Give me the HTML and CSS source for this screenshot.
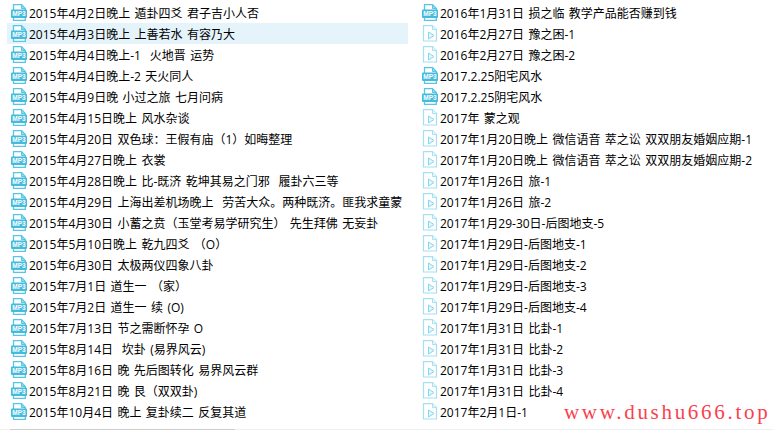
FILE: index.html
```html
<!DOCTYPE html>
<html lang="zh-CN">
  <head>
    <meta charset="UTF-8">
    <title>文件列表</title>
    <link rel="stylesheet" href="styles.css">
  </head>
  <body>
    <svg class="defs" width="0" height="0">
      <symbol id="mp3" viewBox="0 0 16 17">
        <path d="M2.5 .7H10.5L14.3 4.5V16.3H2.5Z" fill="#fff" stroke="#55c6e5" stroke-width="1.3"/>
        <path d="M10.5 .7V4.5H14.3Z" fill="#8fdcf0" stroke="#55c6e5"/>
        <rect x="0" y="5.5" width="16" height="8.5" rx="1" fill="#43bbdd"/>
      </symbol>
      <symbol id="play" viewBox="0 0 16 17">
        <path d="M1.5 .6H10.5L14.5 4.6V16H1.5Z" fill="#fff" stroke="#a3e0f1" stroke-width="1.2"/>
        <path d="M10.5 .6V4.6H14.5" fill="#e6f8fc" stroke="#a3e0f1"/>
        <path d="M6.5 7L12 10.5L6.5 14Z" fill="#e3f7fc" stroke="#86d6ed"/>
      </symbol>
    </svg>

    <div class="files">
      <div class="file"><svg class="icon" viewBox="0 0 16 17"><use href="#mp3"/><text x="8" y="12.4" class="mp3-label">MP3</text></svg><span>2015年4月2日晚上 遁卦四爻 君子吉小人否</span></div>
      <div class="file selected"><svg class="icon" viewBox="0 0 16 17"><use href="#mp3"/><text x="8" y="12.4" class="mp3-label">MP3</text></svg><span>2015年4月3日晚上 上善若水 有容乃大</span></div>
      <div class="file"><svg class="icon" viewBox="0 0 16 17"><use href="#mp3"/><text x="8" y="12.4" class="mp3-label">MP3</text></svg><span>2015年4月4日晚上-1  火地晋 运势</span></div>
      <div class="file"><svg class="icon" viewBox="0 0 16 17"><use href="#mp3"/><text x="8" y="12.4" class="mp3-label">MP3</text></svg><span>2015年4月4日晚上-2 天火同人</span></div>
      <div class="file"><svg class="icon" viewBox="0 0 16 17"><use href="#mp3"/><text x="8" y="12.4" class="mp3-label">MP3</text></svg><span>2015年4月9日晚 小过之旅 七月问病</span></div>
      <div class="file"><svg class="icon" viewBox="0 0 16 17"><use href="#mp3"/><text x="8" y="12.4" class="mp3-label">MP3</text></svg><span>2015年4月15日晚上 风水杂谈</span></div>
      <div class="file"><svg class="icon" viewBox="0 0 16 17"><use href="#mp3"/><text x="8" y="12.4" class="mp3-label">MP3</text></svg><span>2015年4月20日 双色球：王假有庙（1）如晦整理</span></div>
      <div class="file"><svg class="icon" viewBox="0 0 16 17"><use href="#mp3"/><text x="8" y="12.4" class="mp3-label">MP3</text></svg><span>2015年4月27日晚上 衣裳</span></div>
      <div class="file"><svg class="icon" viewBox="0 0 16 17"><use href="#mp3"/><text x="8" y="12.4" class="mp3-label">MP3</text></svg><span>2015年4月28日晚上 比-既济 乾坤其易之门邪  履卦六三等</span></div>
      <div class="file"><svg class="icon" viewBox="0 0 16 17"><use href="#mp3"/><text x="8" y="12.4" class="mp3-label">MP3</text></svg><span>2015年4月29日 上海出差机场晚上  劳苦大众。两种既济。匪我求童蒙</span></div>
      <div class="file"><svg class="icon" viewBox="0 0 16 17"><use href="#mp3"/><text x="8" y="12.4" class="mp3-label">MP3</text></svg><span>2015年4月30日 小蓄之贲（玉堂考易学研究生） 先生拜佛 无妄卦</span></div>
      <div class="file"><svg class="icon" viewBox="0 0 16 17"><use href="#mp3"/><text x="8" y="12.4" class="mp3-label">MP3</text></svg><span>2015年5月10日晚上 乾九四爻 （O）</span></div>
      <div class="file"><svg class="icon" viewBox="0 0 16 17"><use href="#mp3"/><text x="8" y="12.4" class="mp3-label">MP3</text></svg><span>2015年6月30日 太极两仪四象八卦</span></div>
      <div class="file"><svg class="icon" viewBox="0 0 16 17"><use href="#mp3"/><text x="8" y="12.4" class="mp3-label">MP3</text></svg><span>2015年7月1日 道生一 （家）</span></div>
      <div class="file"><svg class="icon" viewBox="0 0 16 17"><use href="#mp3"/><text x="8" y="12.4" class="mp3-label">MP3</text></svg><span>2015年7月2日 道生一 续 (O)</span></div>
      <div class="file"><svg class="icon" viewBox="0 0 16 17"><use href="#mp3"/><text x="8" y="12.4" class="mp3-label">MP3</text></svg><span>2015年7月13日 节之需断怀孕 O</span></div>
      <div class="file"><svg class="icon" viewBox="0 0 16 17"><use href="#mp3"/><text x="8" y="12.4" class="mp3-label">MP3</text></svg><span>2015年8月14日  坎卦 (易界风云)</span></div>
      <div class="file"><svg class="icon" viewBox="0 0 16 17"><use href="#mp3"/><text x="8" y="12.4" class="mp3-label">MP3</text></svg><span>2015年8月16日 晚 先后图转化 易界风云群</span></div>
      <div class="file"><svg class="icon" viewBox="0 0 16 17"><use href="#mp3"/><text x="8" y="12.4" class="mp3-label">MP3</text></svg><span>2015年8月21日 晚 艮（双双卦)</span></div>
      <div class="file"><svg class="icon" viewBox="0 0 16 17"><use href="#mp3"/><text x="8" y="12.4" class="mp3-label">MP3</text></svg><span>2015年10月4日 晚上 复卦续二 反复其道</span></div>

      <div class="file"><svg class="icon" viewBox="0 0 16 17"><use href="#mp3"/><text x="8" y="12.4" class="mp3-label">MP3</text></svg><span>2016年1月31日 损之临 教学产品能否赚到钱</span></div>
      <div class="file"><svg class="icon" viewBox="0 0 16 17"><use href="#play"/></svg><span>2016年2月27日 豫之困-1</span></div>
      <div class="file"><svg class="icon" viewBox="0 0 16 17"><use href="#play"/></svg><span>2016年2月27日 豫之困-2</span></div>
      <div class="file"><svg class="icon" viewBox="0 0 16 17"><use href="#mp3"/><text x="8" y="12.4" class="mp3-label">MP3</text></svg><span>2017.2.25阳宅风水</span></div>
      <div class="file"><svg class="icon" viewBox="0 0 16 17"><use href="#mp3"/><text x="8" y="12.4" class="mp3-label">MP3</text></svg><span>2017.2.25阴宅风水</span></div>
      <div class="file"><svg class="icon" viewBox="0 0 16 17"><use href="#play"/></svg><span>2017年 蒙之观</span></div>
      <div class="file"><svg class="icon" viewBox="0 0 16 17"><use href="#play"/></svg><span>2017年1月20日晚上 微信语音 萃之讼 双双朋友婚姻应期-1</span></div>
      <div class="file"><svg class="icon" viewBox="0 0 16 17"><use href="#play"/></svg><span>2017年1月20日晚上 微信语音 萃之讼 双双朋友婚姻应期-2</span></div>
      <div class="file"><svg class="icon" viewBox="0 0 16 17"><use href="#play"/></svg><span>2017年1月26日 旅-1</span></div>
      <div class="file"><svg class="icon" viewBox="0 0 16 17"><use href="#play"/></svg><span>2017年1月26日 旅-2</span></div>
      <div class="file"><svg class="icon" viewBox="0 0 16 17"><use href="#play"/></svg><span>2017年1月29-30日-后图地支-5</span></div>
      <div class="file"><svg class="icon" viewBox="0 0 16 17"><use href="#play"/></svg><span>2017年1月29日-后图地支-1</span></div>
      <div class="file"><svg class="icon" viewBox="0 0 16 17"><use href="#play"/></svg><span>2017年1月29日-后图地支-2</span></div>
      <div class="file"><svg class="icon" viewBox="0 0 16 17"><use href="#play"/></svg><span>2017年1月29日-后图地支-3</span></div>
      <div class="file"><svg class="icon" viewBox="0 0 16 17"><use href="#play"/></svg><span>2017年1月29日-后图地支-4</span></div>
      <div class="file"><svg class="icon" viewBox="0 0 16 17"><use href="#play"/></svg><span>2017年1月31日 比卦-1</span></div>
      <div class="file"><svg class="icon" viewBox="0 0 16 17"><use href="#play"/></svg><span>2017年1月31日 比卦-2</span></div>
      <div class="file"><svg class="icon" viewBox="0 0 16 17"><use href="#play"/></svg><span>2017年1月31日 比卦-3</span></div>
      <div class="file"><svg class="icon" viewBox="0 0 16 17"><use href="#play"/></svg><span>2017年1月31日 比卦-4</span></div>
      <div class="file"><svg class="icon" viewBox="0 0 16 17"><use href="#play"/></svg><span>2017年2月1日-1</span></div>
    </div>

    <div class="scrollbar">
      <div class="scrollbar-thumb"></div>
    </div>

    <div class="watermark">www.dushu666.top</div>
  </body>
</html>
```

FILE: styles.css
```css
html, body {
    height: 100%;
}

body {
    margin: 0;
    background-color: #ffffff;
    color: #000000;
    font-family: "Open Sans", "Noto Sans CJK SC", sans-serif;
    font-size: 12px;
    word-spacing: 1.3px;
    overflow: hidden;
    display: flex;
    flex-direction: column;
}

.defs {
    position: absolute;
}

.files {
    flex: 1;
    display: grid;
    grid-auto-flow: column;
    grid-template-rows: repeat(20, 21px);
    grid-template-columns: 401px 340px;
    column-gap: 10px;
    padding: 2px 0 0 7px;
}

.file {
    display: flex;
    align-items: center;
    gap: 2px;
    padding-left: 4px;
    white-space: pre;
}

.file.selected {
    background-color: #e5f3fb;
}

.icon {
    width: 16px;
    height: 17px;
    flex: none;
}

.mp3-label {
    font-family: "Liberation Sans", sans-serif;
    font-size: 6.5px;
    font-weight: bold;
    word-spacing: 0;
    fill: #ffffff;
    text-anchor: middle;
}

.scrollbar {
    height: 1px;
    background-color: #f0f0f0;
}

.scrollbar-thumb {
    width: 225px;
    height: 1px;
    margin-left: 10px;
    background-color: #cdcdcd;
}

.watermark {
    position: absolute;
    left: 564px;
    top: 400px;
    font-family: "Liberation Serif", serif;
    font-size: 21px;
    letter-spacing: 2.7px;
    color: #fb3f4e;
}
```
